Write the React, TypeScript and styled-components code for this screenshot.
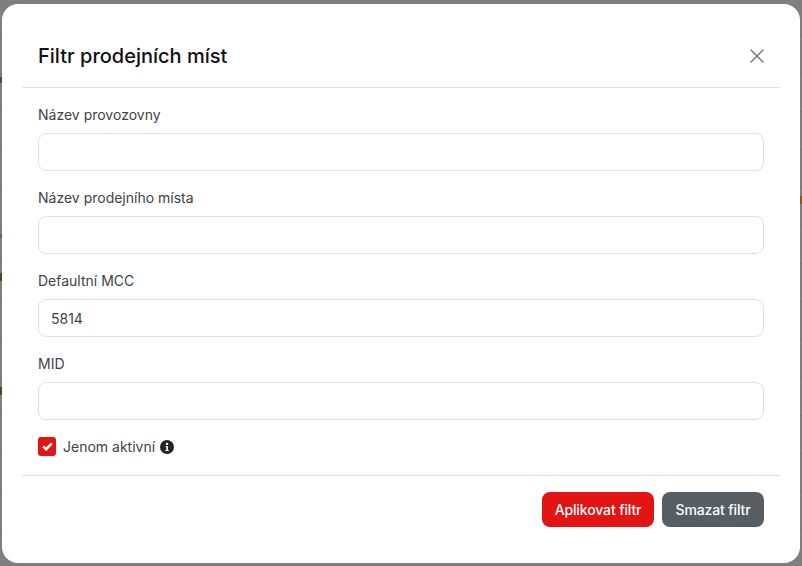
import React from 'react';
import styled, { createGlobalStyle } from 'styled-components';
import { X } from 'lucide-react';

const FIELDS = [
  { label: 'Název provozovny', value: '' },
  { label: 'Název prodejního místa', value: '' },
  { label: 'Defaultní MCC', value: '5814' },
  { label: 'MID', value: '' }
];

// bits of the page behind the dialog that stick out at its edges
const SPECKS = [
  { side: 'left', top: 77, height: 6, color: '#3d4f63' },
  { side: 'left', top: 234, height: 4, color: '#3f6f96' },
  { side: 'left', top: 273, height: 8, color: '#5a4320' },
  { side: 'left', top: 387, height: 8, color: '#5a4320' },
  { side: 'right', top: 196, height: 8, color: '#8a5a24' }
] as const;

const App: React.FC = () => {
  return (
    <>
      <GlobalStyle />
      <Backdrop>
        {
          SPECKS.map((speck) => (
            <Speck
              key={speck.top}
              $side={speck.side}
              $top={speck.top}
              $height={speck.height}
              $color={speck.color}
            />
          ))
        }

        <Modal>
          <Header>
            <Title>Filtr prodejních míst</Title>
            <CloseButton type="button" aria-label="Zavřít">
              <X size={24} strokeWidth={1.5} />
            </CloseButton>
          </Header>

          <Body>
            {
              FIELDS.map((field) => (
                <Field key={field.label}>
                  <Label>{field.label}</Label>
                  <Input type="text" defaultValue={field.value} />
                </Field>
              ))
            }

            <CheckRow>
              <CheckBox>
                <svg width="11" height="9" viewBox="0 0 11 9" fill="none">
                  <path d="M1.2 4.4 4.1 7.1 9.8 1.4" stroke="#fff" strokeWidth="2.6" />
                </svg>
              </CheckBox>
              <CheckLabel>Jenom aktivní</CheckLabel>
              <InfoIcon width="14" height="14" viewBox="0 0 14 14">
                <circle cx="7" cy="7" r="7" fill="#212529" />
                <circle cx="7" cy="3.9" r="1.2" fill="#fff" />
                <path d="M5.6 6h2.3v3.9h.8v1.1H5.4V9.9h.9V7.1h-.7z" fill="#fff" />
              </InfoIcon>
            </CheckRow>
          </Body>

          <Footer>
            <Button type="button" $variant="primary">Aplikovat filtr</Button>
            <Button type="button" $variant="secondary">Smazat filtr</Button>
          </Footer>
        </Modal>
      </Backdrop>
    </>
  );
};

export default App;

const GlobalStyle = createGlobalStyle`
  html, body {
    margin: 0;
    padding: 0;
    height: 100%;
    overflow: hidden;
    font-family: Inter, "Liberation Sans", sans-serif;
  }

  #root {
    height: 100%;
  }
`;

const Backdrop = styled.div`
  position: relative;
  box-sizing: border-box;
  height: 566px;
  padding: 4px 2px 3px 2px;
  background: repeating-linear-gradient(
    to bottom,
    #7f7f7f 0,
    #7f7f7f 37px,
    #757575 37px,
    #757575 38px
  ) 0 -2px;
`;

const Speck = styled.span<{ $side: 'left' | 'right'; $top: number; $height: number; $color: string }>`
  position: absolute;
  ${(p) => p.$side}: 0;
  top: ${(p) => p.$top}px;
  width: 2px;
  height: ${(p) => p.$height}px;
  background: ${(p) => p.$color};
`;

const Modal = styled.div`
  position: relative;
  box-sizing: border-box;
  height: 559px;
  padding: 0 20px;
  background: #fff;
  border-radius: 16px;
  display: flex;
  flex-direction: column;
`;

const Header = styled.div`
  box-sizing: border-box;
  height: 84px;
  padding: 21px 11px 0 16px;
  border-bottom: 1px solid #dee2e6;
  display: flex;
  align-items: center;
  justify-content: space-between;
`;

const Title = styled.h5`
  margin: 0;
  font-size: 20px;
  line-height: 24px;
  font-weight: 500;
  color: #111;
`;

const CloseButton = styled.button`
  width: 24px;
  height: 24px;
  padding: 0;
  border: 0;
  background: none;
  color: #7a7a7a;
  display: flex;
  align-items: center;
  justify-content: center;
`;

const Body = styled.div`
  padding: 16px 16px 0;
  display: flex;
  flex-direction: column;
  gap: 16px;
`;

const Field = styled.div`
  display: flex;
  flex-direction: column;
  gap: 8px;
`;

const Label = styled.label`
  font-size: 14px;
  line-height: 21px;
  color: #3f4246;
`;

const Input = styled.input`
  box-sizing: border-box;
  height: 38px;
  padding: 0 12px;
  border: 1px solid #dee2e6;
  border-radius: 8px;
  background: #fff;
  font-family: inherit;
  font-size: 14px;
  color: #3f4246;
  outline: none;
`;

const CheckRow = styled.div`
  height: 19px;
  margin-top: 1px;
  display: flex;
  align-items: center;
`;

const CheckBox = styled.span`
  width: 18px;
  height: 19px;
  border-radius: 3px;
  background: #e31414;
  display: flex;
  align-items: center;
  justify-content: center;
`;

const CheckLabel = styled.span`
  margin-left: 7px;
  padding-top: 1px;
  font-size: 14px;
  line-height: 20px;
  color: #3f4246;
`;

const InfoIcon = styled.svg`
  margin-left: 5px;
`;

const Footer = styled.div`
  margin-top: 19px;
  padding: 16px 16px 0;
  border-top: 1px solid #dee2e6;
  display: flex;
  justify-content: flex-end;
  gap: 8px;
`;

const Button = styled.button<{ $variant: 'primary' | 'secondary' }>`
  width: ${(p) => (p.$variant === 'primary' ? '112px' : '102px')};
  height: 35px;
  padding: 0;
  border: 0;
  border-radius: 8px;
  background: ${(p) => (p.$variant === 'primary' ? '#e31414' : '#565e64')};
  font-family: inherit;
  font-size: 14px;
  font-weight: 500;
  letter-spacing: -0.12px;
  color: #fff;
`;
